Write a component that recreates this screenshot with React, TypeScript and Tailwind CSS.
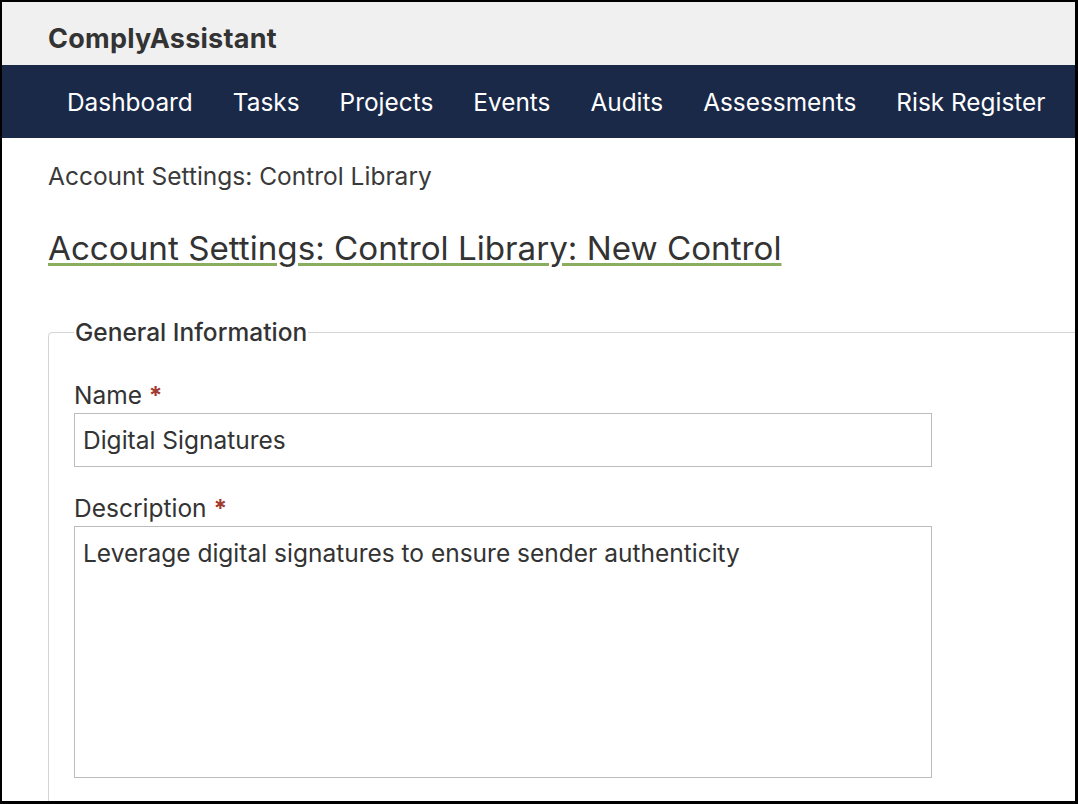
export default function App() {
  const navItems = ['Dashboard', 'Tasks', 'Projects', 'Events', 'Audits', 'Assessments', 'Risk Register']

  return (
    <div className="w-[1078px] h-[804px] bg-black pt-[2px] pl-[2px] pr-[3px] pb-[3px] font-['Inter',sans-serif]">
      <div className="w-full h-full bg-white overflow-hidden">
        {/* Header */}
        <div className="h-[63px] bg-[#f0f0f0] flex items-center pl-[46px] pt-[10px]">
          <span className="text-[27px] leading-[34px] font-bold tracking-[0.25px] text-[#333]">ComplyAssistant</span>
        </div>

        {/* Nav */}
        <nav className="h-[73px] bg-[#1b2949] flex items-center pl-[65px] gap-[40px] whitespace-nowrap">
          {navItems.map((item) => (
            <a key={item} className="text-[24.4px] leading-[32px] text-white">
              {item}
            </a>
          ))}
        </nav>

        <div className="pl-[46px] pt-[22px]">
          {/* Breadcrumb */}
          <div className="text-[24.5px] text-[#3a3a3a] leading-[32px]">Account Settings: Control Library</div>

          <h1 className="mt-[34px] text-[33.2px] text-[#333] leading-[44px] underline decoration-[#8aad5f] decoration-[3px] underline-offset-[3px] whitespace-nowrap">
            Account Settings: Control Library: New Control
          </h1>

          {/* Form */}
          <fieldset className="mt-[46px] w-[1100px] border border-[#d4d4d4] rounded-[4px] pl-[25px] pt-0 pb-[40px]">
            <legend className="px-[1px] text-[24.5px] leading-[32px] font-medium text-[#333]">General Information</legend>

            <label className="block mt-[31px] text-[24.5px] text-[#333] leading-[32px]">
              Name <span className="text-[#a23a32] font-bold">*</span>
            </label>
            <input
              className="block mt-[2px] w-[858px] h-[54px] border border-[#bcbcbc] px-[8px] text-[24.5px] leading-[32px] text-[#333] outline-none"
              defaultValue="Digital Signatures"
            />

            <label className="block mt-[25px] text-[24.5px] text-[#333] leading-[32px]">
              Description <span className="text-[#a23a32] font-bold">*</span>
            </label>
            <textarea
              className="block mt-[2px] w-[858px] h-[252px] border border-[#bcbcbc] px-[8px] py-[10px] text-[24.5px] text-[#333] leading-[32px] outline-none resize-none"
              defaultValue="Leverage digital signatures to ensure sender authenticity"
            />
          </fieldset>
        </div>
      </div>
    </div>
  )
}
